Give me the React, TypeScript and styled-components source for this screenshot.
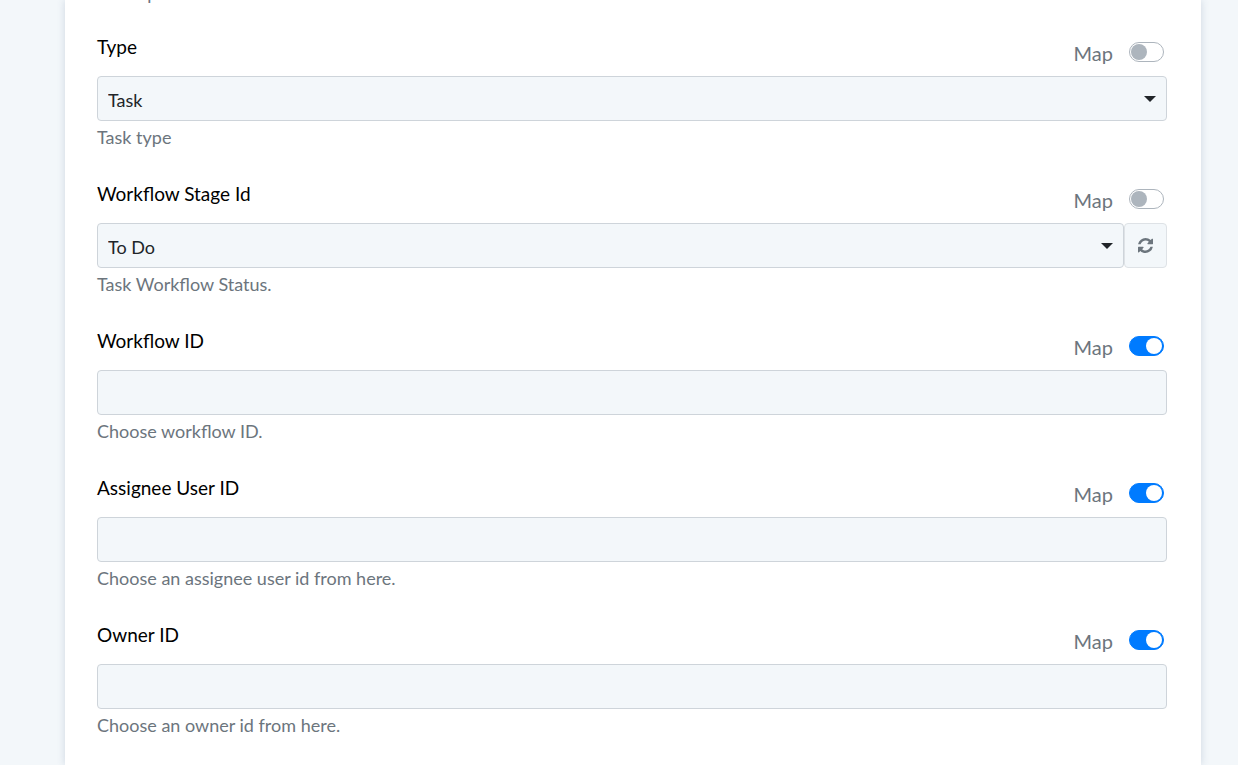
import React, { useId, useState } from "react";
import styled, { createGlobalStyle } from "styled-components";

const GlobalStyle = createGlobalStyle`
  *, *::before, *::after { box-sizing: border-box; }
  html, body, #root { height: 100%; }
  body {
    margin: 0;
    overflow: hidden;
    background: #f3f7fa;
    color: #212529;
    font-family: Lato, "Open Sans", sans-serif;
  }
`;

const Page = styled.main`
  height: 100%;
  display: flex;
  padding: 0 37px 0 65px;
`;

const Card = styled.form`
  flex: 1;
  min-width: 0;
  display: flex;
  flex-direction: column;
  justify-content: flex-end;
  padding: 0 34px 17px 32px;
  background: #fff;
  box-shadow: 0 0 8px rgba(60, 90, 130, 0.2);
`;

const Field = styled.section`
  flex: none;
  display: flex;
  flex-direction: column;
  padding-top: 20px;
`;

const FieldHeader = styled.div`
  display: flex;
  justify-content: space-between;
  height: 43px;
  padding-right: 3px;
`;

const Label = styled.label`
  padding-top: 2px;
  color: #000;
  font-size: 19px;
  line-height: 24px;
`;

const MapLabel = styled.label`
  display: flex;
  align-items: center;
  gap: 16px;
  height: 24px;
  margin-top: 8px;
  color: #6c757d;
  font-size: 20px;
  line-height: 24px;
`;

const Switch = styled.input`
  appearance: none;
  width: 35px;
  height: 20px;
  margin: 0 0 2px;
  padding: 1px;
  border: 1px solid #adb5bd;
  border-radius: 10px;
  background: #fff;
  cursor: pointer;

  &::before {
    content: "";
    display: block;
    width: 16px;
    height: 16px;
    border-radius: 50%;
    background: #adb5bd;
  }
  &:checked {
    border-color: #007bff;
    background: #007bff;
  }
  &:checked::before {
    margin-left: 15px;
    background: #fff;
  }
`;

const ControlRow = styled.div`
  display: flex;
`;

const SelectBox = styled.div`
  flex: 1;
  display: grid;
  align-items: center;
  justify-items: end;

  > * { grid-area: 1 / 1; }
`;

const Arrow = styled.svg`
  width: 12px;
  height: 6px;
  margin-right: 11px;
  fill: #212529;
  pointer-events: none;
`;

const Select = styled.select`
  appearance: none;
  width: 100%;
  height: 45px;
  padding: 2px 30px 0 10px;
  border: 1px solid #ced4da;
  border-radius: 4px;
  background: #f3f7fa;
  color: #212529;
  font: 18px Lato, "Open Sans", sans-serif;
`;

const TextInput = styled.input`
  flex: 1;
  height: 45px;
  padding: 0 10px;
  border: 1px solid #ced4da;
  border-radius: 4px;
  background: #f3f7fa;
  color: #212529;
  font: 18px Lato, "Open Sans", sans-serif;
`;

const RefreshButton = styled.button`
  display: flex;
  align-items: center;
  justify-content: center;
  width: 43px;
  height: 45px;
  padding: 0;
  border: 1px solid #dee2e6;
  border-radius: 4px;
  background: #f3f7fa;
  color: #6c757d;
  cursor: pointer;
`;

const Help = styled.p`
  flex: none;
  margin: 0;
  padding-top: 4px;
  color: #6c757d;
  font-size: 18px;
  line-height: 24px;
  height: 39px;
`;

const LeadHelp = styled(Help)`
  height: 36px;
`;

const RefreshIcon = () => (
  <svg width="15" height="15" viewBox="0 0 1536 1536" fill="currentColor" aria-hidden="true">
    <path d="M1511 928q0 5-1 7-64 268-268 434.500T764 1536q-146 0-282.500-55T238 1324l-129 129q-19 19-45 19t-45-19-19-45V960q0-26 19-45t45-19h448q26 0 45 19t19 45-19 45l-137 137q71 66 161 102t187 36q134 0 250-65t186-179q11-17 53-117 8-23 30-23h192q13 0 22.500 9.500t9.500 22.500zm25-800v448q0 26-19 45t-45 19h-448q-26 0-45-19t-19-45 19-45l138-138Q969 256 768 256q-134 0-250 65T332 500q-11 17-53 117-8 23-30 23H50q-13 0-22.500-9.500T18 608v-7q65-268 270-434.500T768 0q146 0 284 55.500T1297 212l130-129q19-19 45-19t45 19 19 45z" />
  </svg>
);

interface FieldProps {
  label: string;
  help: string;
  option?: string;
  refreshable?: boolean;
}

const MappedField = ({ label, help, option, refreshable }: FieldProps) => {
  const id = useId();
  const [mapped, setMapped] = useState(!option);
  return (
    <Field>
      <FieldHeader>
        <Label htmlFor={id}>{label}</Label>
        <MapLabel>
          Map
          <Switch type="checkbox" checked={mapped} onChange={(e) => setMapped(e.target.checked)} />
        </MapLabel>
      </FieldHeader>
      <ControlRow>
        {option ? (
          <SelectBox>
            <Select id={id} defaultValue={option}>
              <option>{option}</option>
            </Select>
            <Arrow viewBox="0 0 12 6" aria-hidden="true">
              <path d="M0 0h12L6 6z" />
            </Arrow>
          </SelectBox>
        ) : (
          <TextInput id={id} type="text" />
        )}
        {refreshable && (
          <RefreshButton type="button" aria-label="Refresh">
            <RefreshIcon />
          </RefreshButton>
        )}
      </ControlRow>
      <Help>{help}</Help>
    </Field>
  );
};

const fields: FieldProps[] = [
  { label: "Type", help: "Task type", option: "Task" },
  { label: "Workflow Stage Id", help: "Task Workflow Status.", option: "To Do", refreshable: true },
  { label: "Workflow ID", help: "Choose workflow ID." },
  { label: "Assignee User ID", help: "Choose an assignee user id from here." },
  { label: "Owner ID", help: "Choose an owner id from here." },
];

export default function App() {
  return (
    <>
      <GlobalStyle />
      <Page>
        <Card>
          <LeadHelp>Description</LeadHelp>
          {fields.map((field) => (
            <MappedField key={field.label} {...field} />
          ))}
        </Card>
      </Page>
    </>
  );
}
